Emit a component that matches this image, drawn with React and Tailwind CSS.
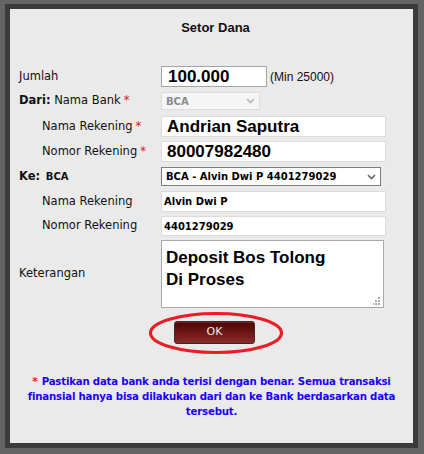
import React from "react";

const label = "text-[11.5px] text-[#111] leading-none";
const lf = { fontFamily: '"DejaVu Sans", sans-serif' };

function Star() {
  return <span className="text-[#e8142a] ml-[3px]">*</span>;
}

function Chevron({ color }) {
  return (
    <svg width="9" height="6" viewBox="0 0 9 6" className="ml-auto mr-[4px]">
      <path d="M1 1 L4.5 4.5 L8 1" fill="none" stroke={color} strokeWidth="1.6" />
    </svg>
  );
}

export default function App() {
  return (
    <div className="w-[424px] h-[454px] bg-[#646464] pt-[4px] pl-[5px] pr-[6px] pb-[6px]">
      <div className="w-full h-full border-[5px] border-t-[5px] border-[#3b3b3b] bg-[#eaeaea] flex flex-col" style={lf}>
        <div className="h-[57px] flex pt-[9px] justify-center">
          <div className="text-[13px] font-bold text-[#111] ml-[8px]" style={{ fontFamily: '"Liberation Sans", sans-serif' }}>Setor Dana</div>
        </div>
        <div className="flex flex-col pl-[9px]">
          {/* Jumlah */}
          <div className="flex items-center h-[21px]">
            <div className={`w-[142px] ${label}`}>Jumlah</div>
            <div className="w-[106px] h-[21px] bg-white border border-[#a4a4a4] flex items-center px-[6px]">
              <span className="text-[17px] font-bold text-black" style={{ fontFamily: '"Liberation Sans", sans-serif' }}>100.000</span>
            </div>
            <span className="ml-[3px] text-[12px] text-[#111]" style={{ fontFamily: '"Liberation Sans", sans-serif' }}>(Min 25000)</span>
          </div>
          {/* Dari */}
          <div className="flex items-center h-[18px] mt-[5px]">
            <div className={`w-[142px] ${label}`}><b>Dari:</b> Nama Bank<Star /></div>
            <div className="w-[99px] h-[18px] bg-[#f5f5f5] border border-[#dcdcdc] flex items-center pl-[4px]">
              <span className="text-[10px] font-bold text-[#8a8a8a]">BCA</span>
              <Chevron color="#b5b5b5" />
            </div>
          </div>
          {/* Nama Rekening */}
          <div className="flex items-center h-[21px] mt-[6px]">
            <div className={`w-[142px] pl-[23px] ${label}`}>Nama Rekening<Star /></div>
            <div className="w-[225px] h-[21px] bg-white border border-[#dcdcdc] flex items-center px-[5px]">
              <span className="text-[17px] font-bold text-black" style={{ fontFamily: '"Liberation Sans", sans-serif' }}>Andrian Saputra</span>
            </div>
          </div>
          {/* Nomor Rekening */}
          <div className="flex items-center h-[21px] mt-[4px]">
            <div className={`w-[142px] pl-[23px] ${label}`}>Nomor Rekening<Star /></div>
            <div className="w-[225px] h-[21px] bg-white border border-[#dcdcdc] flex items-center px-[5px]">
              <span className="text-[17px] font-bold text-black" style={{ fontFamily: '"Liberation Sans", sans-serif' }}>80007982480</span>
            </div>
          </div>
          {/* Ke */}
          <div className="flex items-center h-[19px] mt-[5px]">
            <div className={`w-[142px] ${label}`}><b>Ke:</b> <b className="text-[10px] ml-[2px]">BCA</b></div>
            <div className="w-[220px] h-[19px] bg-white border border-[#7d7d7d] flex items-center pl-[4px]">
              <span className="text-[10px] font-bold text-black">BCA - Alvin Dwi P 4401279029</span>
              <Chevron color="#666" />
            </div>
          </div>
          {/* Nama Rekening 2 */}
          <div className="flex items-center h-[21px] mt-[5px]">
            <div className={`w-[142px] pl-[23px] ${label}`}>Nama Rekening</div>
            <div className="w-[225px] h-[21px] bg-white border border-[#dcdcdc] flex items-center px-[2px]">
              <span className="text-[10px] font-bold text-black">Alvin Dwi P</span>
            </div>
          </div>
          {/* Nomor Rekening 2 */}
          <div className="flex items-center h-[20px] mt-[4px]">
            <div className={`w-[142px] pl-[23px] ${label}`}>Nomor Rekening</div>
            <div className="w-[225px] h-[20px] bg-white border border-[#dcdcdc] flex items-center px-[2px]">
              <span className="text-[10px] font-bold text-black">4401279029</span>
            </div>
          </div>
          {/* Keterangan */}
          <div className="flex items-center h-[68px] mt-[4px]">
            <div className={`w-[142px] ${label}`}>Keterangan</div>
            <div className="relative w-[223px] h-[68px] bg-white border border-[#a9a9a9] pl-[4px] pt-[6px]">
              <div className="text-[17px] font-bold text-black leading-[22px]" style={{ fontFamily: '"Liberation Sans", sans-serif' }}>
                Deposit Bos Tolong<br />Di Proses
              </div>
              <svg width="8" height="8" viewBox="0 0 8 8" className="absolute right-[2px] bottom-[2px]">
                <rect x="5" y="0" width="2" height="2" fill="#aaa" />
                <rect x="2" y="3" width="2" height="2" fill="#aaa" />
                <rect x="5" y="3" width="2" height="2" fill="#aaa" />
                <rect x="-1" y="6" width="2" height="2" fill="#aaa" />
                <rect x="2" y="6" width="2" height="2" fill="#aaa" />
                <rect x="5" y="6" width="2" height="2" fill="#aaa" />
              </svg>
            </div>
          </div>
        </div>
        {/* OK */}
        <div className="relative flex justify-start pl-[164px] mt-[13px]">
          <div className="w-[81px] h-[23px] rounded-[3px] border border-[#3a2a2a] bg-gradient-to-b from-[#4e0404] to-[#8c2a2a] flex items-center justify-center shadow-[inset_0_1px_0_rgba(255,255,255,0.15)]">
            <span className="text-[11px] text-[#f2e6e6]" style={{ fontFamily: '"DejaVu Sans", sans-serif' }}>OK</span>
          </div>
          <svg className="absolute left-[138px] top-[-10px]" width="136" height="44" viewBox="0 0 136 44">
            <ellipse cx="68" cy="22" rx="65.5" ry="19.5" fill="none" stroke="#ea1c24" strokeWidth="3.2" />
          </svg>
        </div>
        {/* Footer */}
        <div className="mt-[30px] px-[9px] text-center text-[10.2px] font-bold text-[#1a00ff] leading-[15px]">
          <span className="text-[#f0102a] mr-[4px]">*</span><span className="tracking-[-0.2px]">Pastikan data bank anda terisi dengan benar. Semua transaksi finansial hanya bisa dilakukan dari dan ke Bank berdasarkan data tersebut.</span>
        </div>
      </div>
    </div>
  );
}
